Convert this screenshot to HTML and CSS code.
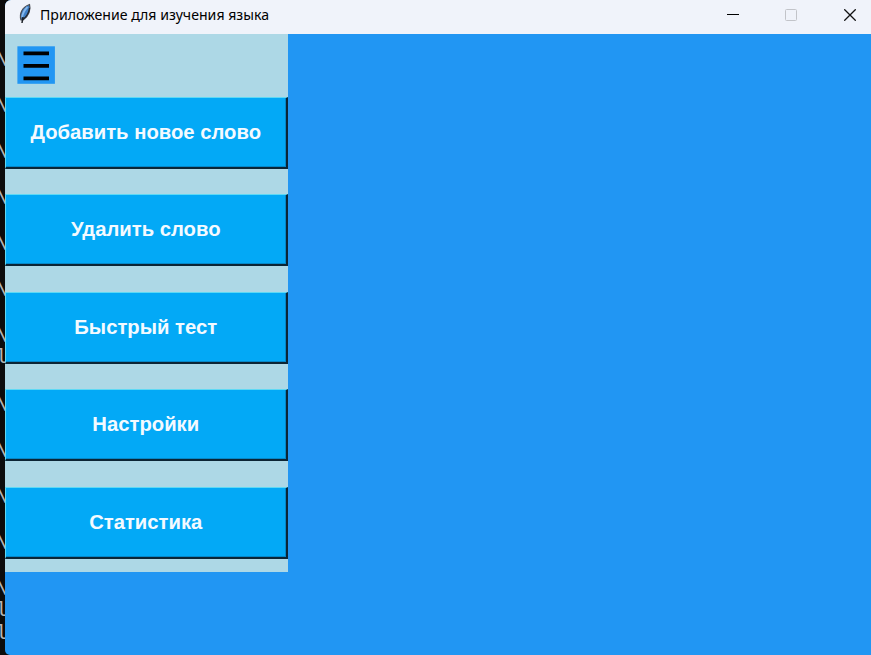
FILE: index.html
```
<!DOCTYPE html>
<html lang="ru">
<head>
<meta charset="utf-8">
<title>Приложение для изучения языка</title>
<link rel="stylesheet" href="styles.css">
</head>
<body>
<div class="desktop">
<div class="console"><pre class="lines">


\

\

\

\

\

\

\
l

\

\

\

\

\
l
l</pre></div>
<main class="window">
  <header class="titlebar">
    <svg class="feather" width="16" height="22" viewBox="0 0 16 22">
      <path d="M4 17 C2 11 5 4 12.5 1.5 C14 6 12 13 6 17Z" fill="#3f7fc6" stroke="#4a4d54" stroke-width="1.2"/>
      <path d="M10.5 4 C7 7.5 5.5 11 5 14.5" fill="none" stroke="#86b8ec" stroke-width="1.8"/>
      <path d="M12.5 5 C12 10 9 14 6 16.5" fill="none" stroke="#22262e" stroke-width="1.3"/>
      <path d="M6 14L5 20" fill="none" stroke="#1c2027" stroke-width="1.5"/>
    </svg>
    <h1 class="title"><svg class="title-text" width="260" height="28"><text x="0" y="17" textLength="229" lengthAdjust="spacingAndGlyphs">Приложение для изучения языка</text></svg></h1>
    <div class="controls">
      <svg width="12" height="12" viewBox="0 0 12 12"><path d="M0 5.5H12" stroke="#000"/></svg>
      <svg width="12" height="12" viewBox="0 0 12 12"><rect x=".5" y=".5" width="11" height="11" rx="1" fill="none" stroke="#c2c4c9"/></svg>
      <svg width="12" height="12" viewBox="0 0 12 12"><path d="M.3.3 11.7 11.7M11.7.3.3 11.7" stroke="#111" stroke-width="1.3"/></svg>
    </div>
  </header>
  <nav class="sidebar">
    <svg class="burger" width="38" height="38" viewBox="0 0 38 38">
      <rect x=".4" y=".3" width="37.5" height="37.5" fill="#2196f3"/>
      <path d="M6.5 7.3H32M6.5 19.8H32M6.5 32.3H32" stroke="#000" stroke-width="3.7"/>
    </svg>
    <div class="menu">
      <button>Добавить новое слово</button>
      <button>Удалить слово</button>
      <button>Быстрый тест</button>
      <button>Настройки</button>
      <button>Статистика</button>
    </div>
  </nav>
</main>
</div>
</body>
</html>
```
FILE: styles.css
```
* { box-sizing: border-box; }
body { margin: 0; background: #0c0c0c; }
.desktop { display: flex; width: 871px; height: 655px; overflow: hidden; }
.console {
  flex: none;
  width: 5px;
  height: 655px;
  overflow: hidden;
  display: flex;
  justify-content: flex-end;
}
.lines {
  margin: 0 -3px 0 0;
  color: #b5b5b5;
  font: 20px/23px "DejaVu Sans Mono", monospace;
}
.window {
  flex: 1;
  height: 655px;
  background: #2196f3;
  border-radius: 6px 0 0 5px;
  overflow: hidden;
}
.titlebar {
  display: flex;
  height: 34px;
  padding-left: 12px;
  background: #f0f3fa;
}
.feather { flex: none; margin-top: 3px; }
.title { margin: 3px 0 0 7px; line-height: 0; font-weight: 400; }
.title-text { display: block; overflow: visible; font: 15px "Noto Sans", sans-serif; }
.controls {
  display: flex;
  gap: 46.5px;
  margin-left: auto;
  padding: 9px 15px 0 0;
}
.controls svg:first-child { margin-right: -.5px; }
.controls svg:nth-child(2) { margin-right: .5px; }
.sidebar {
  width: 282.5px;
  height: 537.5px;
  padding-top: 12px;
  background: #add8e6;
}
.burger { display: block; margin-left: 12px; }
.menu { display: flex; flex-direction: column; gap: 25.5px; padding-top: 12.6px; }
.menu button {
  height: 72px;
  padding: 0;
  border: solid;
  border-width: 1px 2px 2px 1px;
  border-color: #5ed9f5 #0b2535 #0b2535 #5ed9f5;
  box-shadow: inset -1px -1px #0587c8;
  background: #03a9f6;
  color: #f4faff;
  font: bold 20.25px "Liberation Sans", sans-serif;
}
```
